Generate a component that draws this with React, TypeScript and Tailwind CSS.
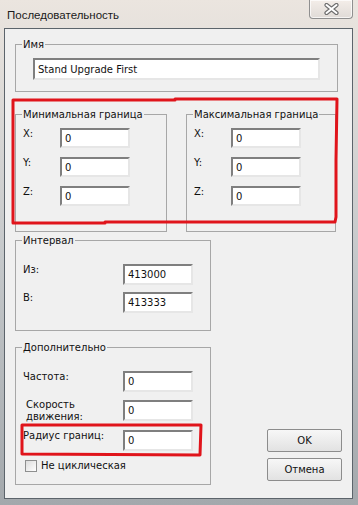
import React from 'react';

const ui = { fontFamily: '"DejaVu Sans", "Noto Sans", sans-serif' };

const Field: React.FC<{ value?: string; className?: string }> = ({ value = '', className = '' }) => (
  <div
    className={`flex items-center bg-white border-2 border-t-[#7f7f7f] border-l-[#7f7f7f] border-r-[#e6e6e6] border-b-[#e6e6e6] pl-[3px] text-[10px] text-[#111] ${className}`}
  >
    {value}
  </div>
);

const Group: React.FC<{ title: string; className?: string; children?: React.ReactNode }> = ({ title, className = '', children }) => (
  <div className={`relative border border-[#a7a7a7] ${className}`}>
    <span className="absolute -top-[7px] left-[6px] px-[1px] bg-[#f0f0f0] leading-[13px] text-[10px] text-[#111]">
      {title}
    </span>
    {children}
  </div>
);

const XYZ: React.FC<{ title: string; className?: string }> = ({ title, className = '' }) => (
  <Group title={title} className={`h-[118px] pt-[13px] pl-[7px] ${className}`}>
    <div className="flex flex-col gap-[9px]">
      {['X:', 'Y:', 'Z:'].map((axis) => (
        <div key={axis} className="flex items-start h-[20px]">
          <span className="w-[37px] text-[10px] leading-[12px] text-[#111]">{axis}</span>
          <Field value="0" className="w-[70px] h-[20px]" />
        </div>
      ))}
    </div>
  </Group>
);

const Row: React.FC<{ label: React.ReactNode; value: string; labelClass?: string }> = ({ label, value, labelClass = '' }) => (
  <div className="flex items-start h-[21px]">
    <span className={`w-[100px] text-[10px] leading-[12px] text-[#111] ${labelClass}`}>{label}</span>
    <Field value={value} className="w-[70px] h-[21px]" />
  </div>
);

const Button: React.FC<{ children: React.ReactNode }> = ({ children }) => (
  <div className="flex items-center justify-center w-[75px] h-[23px] border border-[#8c8c8c] rounded-[2px] bg-gradient-to-b from-[#f7f7f7] to-[#e2e2e2] text-[10px] text-[#111]">
    {children}
  </div>
);

export default function App() {
  return (
    <div
      className="relative w-[358px] h-[505px] overflow-hidden bg-gradient-to-b from-[#ebe5df] via-[#c6c9cb] to-[#a3a8ac]"
      style={ui}
    >
      {/* title bar */}
      <div className="flex h-[28px]">
        <span
          className="pl-[7px] pt-[7px] text-[11.5px] leading-[16px] text-[#1a1a1a]"
          style={{ fontFamily: '"Liberation Sans", "Noto Sans", sans-serif' }}
        >
          Последовательность
        </span>
        <div className="ml-auto mr-[5px] w-[44px] h-[19px] flex items-center justify-center border border-t-0 border-[#8f8f8f] rounded-b-[4px] bg-gradient-to-b from-[#f4eee9] to-[#e0dbd7] shadow-[inset_0_0_0_1px_rgba(255,255,255,0.7)]">
          <svg width="15" height="12" viewBox="0 0 15 12">
            <path d="M2.5 2 L12.5 10 M12.5 2 L2.5 10" stroke="#6e6e6e" strokeWidth="4.2" strokeLinecap="round" />
            <path d="M2.5 2 L12.5 10 M12.5 2 L2.5 10" stroke="#ffffff" strokeWidth="2" strokeLinecap="round" />
          </svg>
        </div>
      </div>

      {/* client area */}
      <div className="ml-[4px] w-[349px] h-[471px] border border-[#5c646b] bg-[#f0f0f0] pl-[10px]">
        <Group title="Имя" className="mt-[15px] w-[323px] h-[48px] pt-[13px] pl-[17px]">
          <Field value="Stand Upgrade First" className="w-[287px] h-[22px]" />
        </Group>

        <div className="flex gap-[19px] mt-[22px]">
          <XYZ title="Минимальная граница" className="w-[152px]" />
          <XYZ title="Максимальная граница" className="w-[150px]" />
        </div>

        <div className="flex">
          <div className="flex flex-col w-[196px]">
            <Group title="Интервал" className="mt-[8px] h-[91px] pt-[23px] pl-[7px]">
              <div className="flex flex-col gap-[7px]">
                <Row label="Из:" value="413000" />
                <Row label="В:" value="413333" />
              </div>
            </Group>

            <Group title="Дополнительно" className="mt-[16px] h-[138px] pt-[23px] pl-[7px]">
              <div className="flex flex-col">
                <Row label="Частота:" value="0" />
                <div className="mt-[8px]">
                  <Row
                    label={
                      <>
                        Скорость
                        <br />
                        движения:
                      </>
                    }
                    labelClass="pl-[3px] -mt-[1px]"
                    value="0"
                  />
                </div>
                <div className="mt-[9px]">
                  <Row label="Радиус границ:" value="0" />
                </div>
                <div className="flex items-center mt-[9px] ml-[2px] gap-[4px]">
                  <div className="w-[12px] h-[12px] border border-[#8e8f8f] bg-gradient-to-br from-[#dcdcdc] to-[#ffffff]" />
                  <span className="text-[10px] leading-[12px] text-[#111]">Не циклическая</span>
                </div>
              </div>
            </Group>
          </div>

          <div className="flex flex-col gap-[6px] self-end mb-[4px] ml-[56px]">
            <Button>OK</Button>
            <Button>Отмена</Button>
          </div>
        </div>
      </div>

      {/* red annotation marks */}
      <svg className="absolute inset-0 pointer-events-none" width="358" height="505" viewBox="0 0 358 505">
        <g fill="none" stroke="#e0141b" strokeWidth="3" strokeLinejoin="round">
          <path d="M13 100 L175 100 L175 99 L337 99 L336 160 L336 217 L335 222 L105 222 L105 223 L13 223 L13 160 Z" />
          <path d="M22 425 L201 425 L200 455 L22 454 Z" />
        </g>
      </svg>
    </div>
  );
}
